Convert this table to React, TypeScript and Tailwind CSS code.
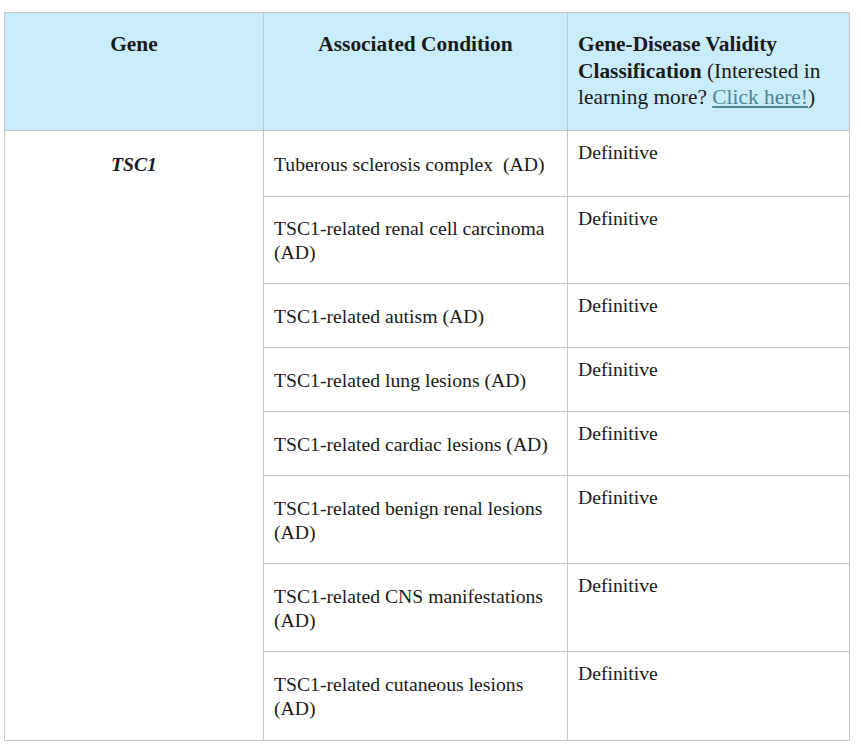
const conditions: { name: string; h: string }[] = [
  { name: "Tuberous sclerosis complex\u00a0 (AD)", h: "h-[66px]" },
  { name: "TSC1-related renal cell carcinoma (AD)", h: "h-[87px]" },
  { name: "TSC1-related autism (AD)", h: "h-[64px]" },
  { name: "TSC1-related lung lesions (AD)", h: "h-[64px]" },
  { name: "TSC1-related cardiac lesions (AD)", h: "h-[64px]" },
  { name: "TSC1-related benign renal lesions (AD)", h: "h-[88px]" },
  { name: "TSC1-related CNS manifestations (AD)", h: "h-[88px]" },
  { name: "TSC1-related cutaneous lesions (AD)", h: "h-[89px]" },
];

export default function App() {
  return (
    <div className="bg-white w-[861px] h-[748px] pt-3 pl-1 font-[family-name:Liberation_Serif,Times_New_Roman,serif] text-[#1a1a1a]">
      <table className="border-collapse table-fixed w-[845px]">
        <colgroup>
          <col className="w-[259px]" />
          <col className="w-[304px]" />
          <col className="w-[282px]" />
        </colgroup>
        <thead>
          <tr className="bg-[#c9ecfb] h-[118px] text-[21.4px] leading-[26.5px]">
            <th className="border border-[#c6c6c6] align-top pt-[18px] px-2.5 font-bold text-center">Gene</th>
            <th className="border border-[#c6c6c6] align-top pt-[18px] px-2.5 font-bold text-center">Associated Condition</th>
            <th className="border border-[#c6c6c6] align-top pt-[18px] pl-2.5 pr-1 font-normal text-left">
              <b>Gene-Disease Validity Classification</b> (Interested in learning more?{" "}
              <a href="#" className="text-[#4b8596] underline">Click here!</a>)
            </th>
          </tr>
        </thead>
        <tbody className="text-[19.7px] leading-6">
          {conditions.map((c, i) => (
            <tr key={i} className={c.h}>
              {i === 0 && (
                <td rowSpan={conditions.length} className="border border-[#c6c6c6] align-top text-center pt-[21px]">
                  <b><i>TSC1</i></b>
                </td>
              )}
              <td className="border border-[#c6c6c6] align-middle px-2.5">{c.name}</td>
              <td className="border border-[#c6c6c6] align-top pl-2.5 pt-[9px]">Definitive</td>
            </tr>
          ))}
        </tbody>
      </table>
    </div>
  );
}
